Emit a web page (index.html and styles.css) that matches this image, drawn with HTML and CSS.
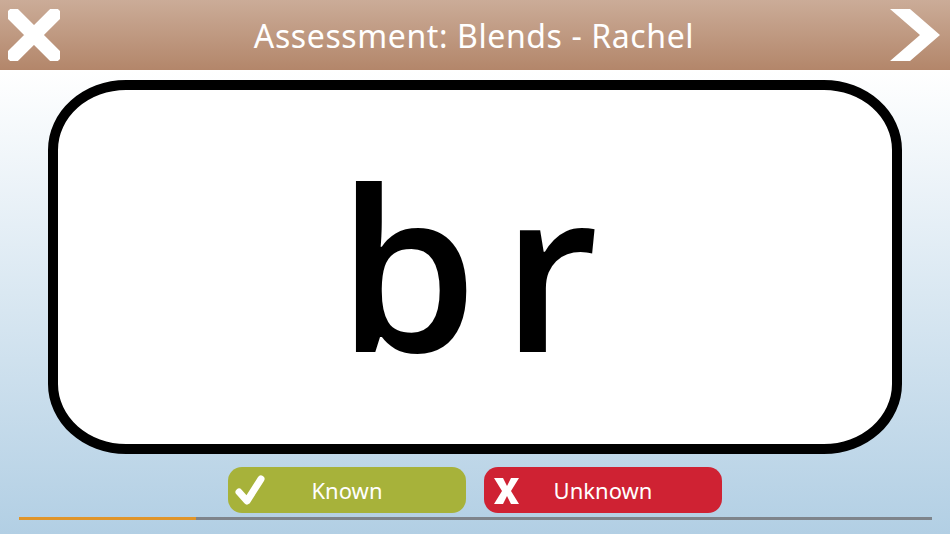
FILE: index.html
```html
<!DOCTYPE html>
<html>
<head>
<meta charset="utf-8">
<link rel="stylesheet" href="styles.css">
</head>
<body>
<div class="app">
  <header class="topbar">
    <button class="icon-btn close" aria-label="Close">
      <svg width="52" height="52" viewBox="0 0 52 52"><path d="M6 6 L46 46 M46 6 L6 46" stroke="#fff" stroke-width="14" stroke-linecap="square" fill="none"/></svg>
    </button>
    <h1 class="title">Assessment: Blends - Rachel</h1>
    <button class="icon-btn next" aria-label="Next">
      <svg width="52" height="52" viewBox="0 0 52 52"><polygon points="2,0 22,0 52,26 22,52 2,52 32,26" fill="#fff"/></svg>
    </button>
  </header>
  <main class="content">
    <div class="card"><span class="word">br</span></div>
    <div class="actions">
      <button class="answer known">
        <svg class="ans-icon" width="30" height="30" viewBox="0 0 30 30"><path d="M4 17 L12 26 L26 4" stroke="#fff" stroke-width="7" stroke-linejoin="round" stroke-linecap="round" fill="none"/></svg>
        <span>Known</span>
      </button>
      <button class="answer unknown">
        <svg class="ans-icon" width="26" height="26" viewBox="0 0 26 26"><polygon points="0,0 9,0 13,8 17,0 25,0 17,13 25,26 17,26 13,18 9,26 0,26 8,13" fill="#fff"/></svg>
        <span>Unknown</span>
      </button>
    </div>
    <div class="progress"><div class="progress-fill" style="width:19.4%"></div></div>
  </main>
</div>
</body>
</html>
```
FILE: styles.css
```css
* { box-sizing: border-box; }
html, body { margin: 0; padding: 0; }
body {
  width: 950px;
  height: 534px;
  overflow: hidden;
  font-family: "Noto Sans", "DejaVu Sans", sans-serif;
  background: linear-gradient(to bottom, #ffffff 70px, #b2cfe4 534px);
}
.app { display: flex; flex-direction: column; height: 534px; }
.topbar {
  height: 70px;
  flex: none;
  display: flex;
  align-items: center;
  justify-content: space-between;
  padding: 0 10px 0 8px;
  background: linear-gradient(to bottom, #cbac98, #b3866a);
}
.icon-btn {
  border: none;
  background: none;
  padding: 0;
  width: 52px;
  height: 52px;
  display: flex;
}
.title {
  margin: 0;
  color: #fff;
  font-weight: 400;
  font-size: 32px;
  letter-spacing: 0.6px;
}
.content {
  flex: 1;
  display: flex;
  flex-direction: column;
  align-items: center;
  padding-top: 10px;
}
.card {
  width: 854px;
  height: 374px;
  border: 10px solid #000;
  border-radius: 78px / 70px;
  background: #fff;
  display: flex;
  align-items: center;
  justify-content: center;
}
.word {
  font-family: "Open Sans", "Noto Sans", sans-serif;
  font-weight: 600;
  font-size: 225px;
  line-height: 1;
  letter-spacing: 24px;
  color: #000;
  margin-top: -4px;
  margin-right: -10px;
}
.actions {
  display: flex;
  gap: 18px;
  margin-top: 13px;
}
.answer {
  position: relative;
  width: 238px;
  height: 46px;
  border: none;
  border-radius: 14px;
  color: #fff;
  font-family: "Noto Sans", sans-serif;
  font-size: 22px;
  display: flex;
  align-items: center;
  justify-content: center;
  padding: 0;
}
.known { background: #a7b23a; }
.unknown { background: #cf2233; }
.ans-icon { position: absolute; left: 7px; top: 8px; }
.unknown .ans-icon { left: 10px; top: 11px; }
.progress {
  width: 913px;
  height: 3px;
  margin-top: 4px;
  background: #7e848b;
}
.progress-fill { height: 3px; background: #e0952a; }
```
